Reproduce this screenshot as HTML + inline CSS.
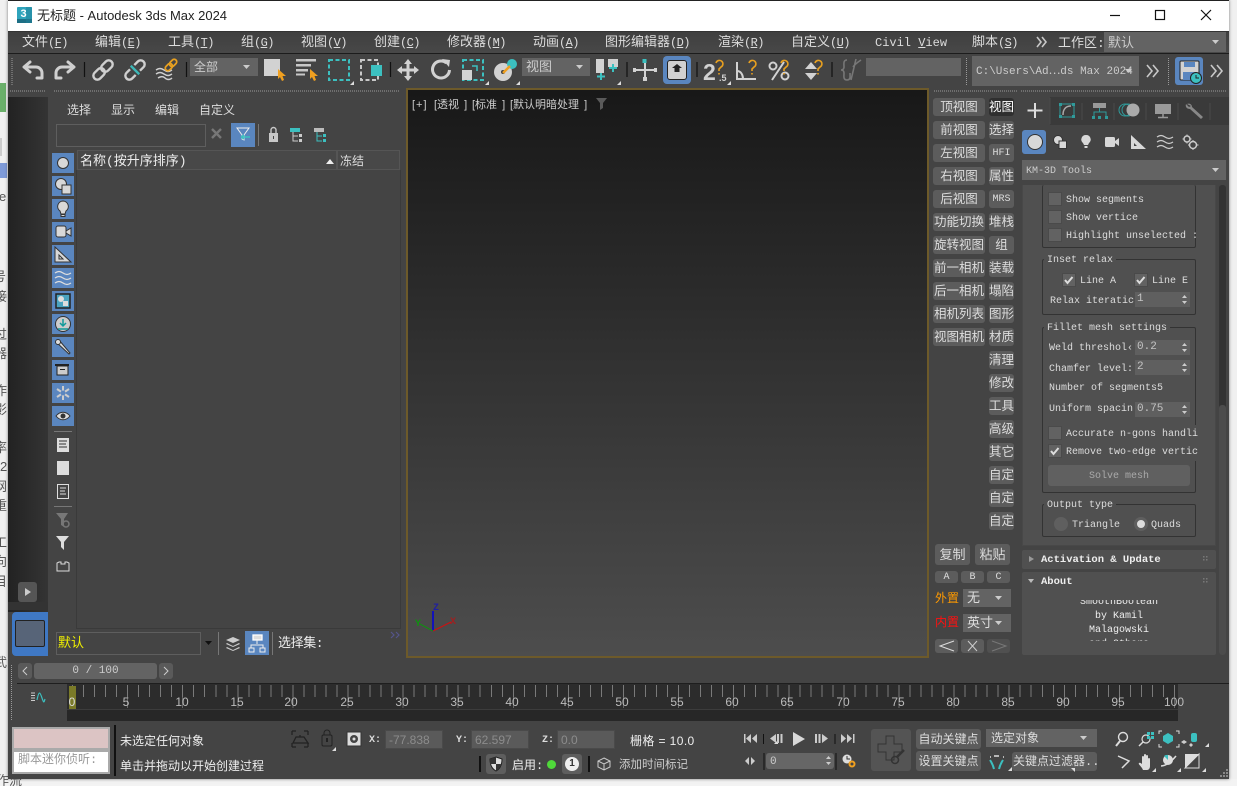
<!DOCTYPE html>
<html><head><meta charset="utf-8"><title>3ds Max</title>
<style>
html,body{margin:0;padding:0;width:1237px;height:786px;overflow:hidden;background:#f0f0f0}
body{position:relative;font:13px/16px "Liberation Mono","WenQuanYi Zen Hei","Noto Sans CJK SC",monospace;color:#ddd}
div,span.t{position:absolute}
.t{white-space:nowrap;line-height:16px;position:absolute;transform:translateY(2px)}
.t.n{transform:none}
.t.k,.t.g{transform:translateY(4px)}
.m{font-size:12px;letter-spacing:-.6px}
.m span{letter-spacing:0}
.m u{text-decoration:underline}
.cj{font-family:"Liberation Sans","WenQuanYi Zen Hei","Noto Sans CJK SC",sans-serif}
.k{font-size:10px;color:#ddd;letter-spacing:0}
.b{background:#5c5c5c;border-radius:3px;text-align:center;color:#ddd;white-space:nowrap;overflow:hidden;box-sizing:border-box;padding-top:2px;font-size:12.5px}
.c{background:#636363;color:#ddd;white-space:nowrap;overflow:hidden;box-sizing:border-box;padding-top:2px}
.bl{background:#5a86bf}
.in{background:#5a5a5a;border:1px solid #4a4a4a;box-sizing:border-box;color:#8c8c8c;font-family:"Liberation Sans",sans-serif;font-size:12px;line-height:19px;padding-left:3px}
.ck{width:12px;height:12px;background:#626262;border:1px solid #4a4a4a}
.sp{background:#5f5f5f;width:55px;height:15px;left:1135px;color:#c4c4c4;font-size:11px;line-height:15px;text-indent:2px}
.gb{border:1px solid #333;border-radius:2px;box-sizing:border-box}
.g{background:#505050;padding:0 3px;line-height:12px;font-size:10px}
.t.tl{transform:none;color:#bbb;font:12px/14px "Liberation Sans",sans-serif;top:695px;width:30px;text-align:center}
</style></head><body>
<!-- background page -->
<div style="left:0;top:83px;width:6px;height:29px;background:#6ab06a"></div>
<div style="left:0;top:138px;width:2px;height:18px;background:#ccc"></div>
<div style="left:0;top:163px;width:7px;height:15px;background:#7f9bd8"></div>
<span class="t n cj" style="left:-1px;top:189px;color:#555">e</span>
<span class="t n cj" style="left:-7px;top:269px;color:#555">号</span>
<span class="t n cj" style="left:-6px;top:289px;color:#555">接</span>
<span class="t n cj" style="left:-6px;top:327px;color:#555">过</span>
<span class="t n cj" style="left:-6px;top:346px;color:#555">器</span>
<span class="t n cj" style="left:-6px;top:383px;color:#555">作</span>
<span class="t n cj" style="left:-6px;top:402px;color:#555">影</span>
<span class="t n cj" style="left:-6px;top:440px;color:#555">率</span>
<span class="t n cj" style="left:0;top:459px;color:#555">2</span>
<span class="t n cj" style="left:-6px;top:479px;color:#555">网</span>
<span class="t n cj" style="left:-6px;top:498px;color:#555">重</span>
<span class="t n cj" style="left:-6px;top:535px;color:#555">工</span>
<span class="t n cj" style="left:-6px;top:554px;color:#555">向</span>
<span class="t n cj" style="left:-6px;top:574px;color:#555">目</span>
<span class="t n cj" style="left:-6px;top:655px;color:#555">武</span>
<div style="left:0;top:779px;width:1237px;height:7px;background:#f3f3f3"></div>
<span class="t n cj" style="left:-4px;top:773px;color:#555;font-size:13px">作流</span>

<!-- window -->
<div style="left:8px;top:0;width:1221px;height:779px;background:#444;box-shadow:0 0 3px rgba(0,0,0,.5)"></div>
<div style="left:8px;top:0;width:1221px;height:1px;background:#222"></div>
<div style="left:8px;top:1px;width:1221px;height:30px;background:#fff"></div>
<span class="t n" style="left:37px;top:8px;color:#222;font:13px/16px 'Liberation Sans','WenQuanYi Zen Hei',sans-serif">无标题 - Autodesk 3ds Max 2024</span>

<!-- menu -->
<div style="left:8px;top:31px;width:1221px;height:22px;background:linear-gradient(#3f3f3f,#484848);border-top:1px solid #333;box-sizing:border-box"></div>
<div style="left:8px;top:53px;width:1221px;height:1px;background:#1c1c1c"></div>
<span class="t m" style="left:22px;top:33px"><span style="font-size:13px">文件</span>(<u>F</u>)</span>
<span class="t m" style="left:95px;top:33px"><span style="font-size:13px">编辑</span>(<u>E</u>)</span>
<span class="t m" style="left:168px;top:33px"><span style="font-size:13px">工具</span>(<u>T</u>)</span>
<span class="t m" style="left:241px;top:33px"><span style="font-size:13px">组</span>(<u>G</u>)</span>
<span class="t m" style="left:301px;top:33px"><span style="font-size:13px">视图</span>(<u>V</u>)</span>
<span class="t m" style="left:374px;top:33px"><span style="font-size:13px">创建</span>(<u>C</u>)</span>
<span class="t m" style="left:447px;top:33px"><span style="font-size:13px">修改器</span>(<u>M</u>)</span>
<span class="t m" style="left:533px;top:33px"><span style="font-size:13px">动画</span>(<u>A</u>)</span>
<span class="t m" style="left:605px;top:33px"><span style="font-size:13px">图形编辑器</span>(<u>D</u>)</span>
<span class="t m" style="left:718px;top:33px"><span style="font-size:13px">渲染</span>(<u>R</u>)</span>
<span class="t m" style="left:791px;top:33px"><span style="font-size:13px">自定义</span>(<u>U</u>)</span>
<span class="t" style="left:875px;top:33px;font-size:12px">Civil <u>V</u>iew</span>
<span class="t m" style="left:972px;top:33px"><span style="font-size:13px">脚本</span>(<u>S</u>)</span>
<span class="t" style="left:1058px;top:34px;font-size:13px">工作区:</span>
<div class="c" style="left:1104px;top:32px;width:122px;height:20px;line-height:19px;text-indent:4px;color:#ccc">默认</div>

<!-- toolbar combos -->
<div class="c" style="left:190px;top:58px;width:68px;height:18px;line-height:16px;text-indent:4px;color:#ccc;font-size:12px">全部</div>
<div class="c" style="left:522px;top:58px;width:68px;height:18px;line-height:16px;text-indent:4px;color:#ccc;font-size:13px">视图</div>
<div class="c" style="left:866px;top:58px;width:95px;height:18px"></div>
<div class="c" style="left:972px;top:56px;width:167px;height:30px;line-height:28px;text-indent:4px;font-size:11px;color:#ccc">C:\Users\Ad⋯ds Max 2024</div>
<div class="bl" style="left:1175px;top:57px;width:28px;height:28px;border-radius:3px"></div>
<div class="bl" style="left:663px;top:56px;width:28px;height:28px;border-radius:4px"></div>
<div style="left:667px;top:60px;width:20px;height:20px;background:#d0d0d0;border:1px solid #222;border-radius:3px;box-sizing:border-box"></div>

<!-- gold strip and dark side -->
<div style="left:8px;top:97px;width:40px;height:515px;background:linear-gradient(90deg,#222,#343434)"></div>
<div style="left:18px;top:582px;width:19px;height:20px;background:#555;border-radius:3px"></div>
<div style="left:8px;top:602px;width:40px;height:8px;background:#333"></div>
<div style="left:12px;top:612px;width:36px;height:44px;background:#3f78c4;border-radius:4px 0 0 4px"></div>
<div style="left:15px;top:620px;width:30px;height:27px;background:#576478;border:1px solid #222;box-sizing:border-box;border-radius:2px"></div>

<!-- left panel -->
<span class="t" style="left:67px;top:101px;font-size:12px">选择</span>
<span class="t" style="left:111px;top:101px;font-size:12px">显示</span>
<span class="t" style="left:155px;top:101px;font-size:12px">编辑</span>
<span class="t" style="left:199px;top:101px;font-size:12px">自定义</span>
<div style="left:56px;top:124px;width:150px;height:23px;border:1px solid #5e5e5e;box-sizing:border-box;background:#434343"></div>
<div class="bl" style="left:231px;top:123px;width:24px;height:24px"></div>
<div style="left:77px;top:150px;width:260px;height:20px;border:1px solid #555;box-sizing:border-box;background:#484848"></div>
<div style="left:337px;top:150px;width:63px;height:20px;border:1px solid #555;box-sizing:border-box;background:#484848"></div>
<span class="t" style="left:80px;top:152px;font-size:13px;color:#eee">名称(按升序排序)</span>
<span class="t" style="left:340px;top:152px;font-size:12px;color:#ddd">冻结</span>
<div style="left:76px;top:170px;width:325px;height:459px;border:1px solid #3a3a3a;box-sizing:border-box;border-top:none"></div>

<div class="bl" style="left:52px;top:153px;width:22px;height:20px"></div>
<div class="bl" style="left:52px;top:176px;width:22px;height:20px"></div>
<div class="bl" style="left:52px;top:199px;width:22px;height:20px"></div>
<div class="bl" style="left:52px;top:222px;width:22px;height:20px"></div>
<div class="bl" style="left:52px;top:245px;width:22px;height:20px"></div>
<div class="bl" style="left:52px;top:268px;width:22px;height:20px"></div>
<div class="bl" style="left:52px;top:291px;width:22px;height:20px"></div>
<div class="bl" style="left:52px;top:314px;width:22px;height:20px"></div>
<div class="bl" style="left:52px;top:337px;width:22px;height:20px"></div>
<div class="bl" style="left:52px;top:360px;width:22px;height:20px"></div>
<div class="bl" style="left:52px;top:383px;width:22px;height:20px"></div>
<div class="bl" style="left:52px;top:406px;width:22px;height:20px"></div>
<div style="left:54px;top:431px;width:18px;height:1px;background:#777"></div>
<div style="left:54px;top:506px;width:18px;height:1px;background:#777"></div>

<div style="left:56px;top:632px;width:145px;height:23px;border:1px solid #5e5e5e;box-sizing:border-box;line-height:21px;color:#f0f000;font-size:13px;text-indent:1px">默认</div>
<div class="bl" style="left:245px;top:631px;width:24px;height:24px"></div>
<span class="t" style="left:278px;top:634px;font-size:13px;letter-spacing:-.4px;color:#eee">选择集:</span>

<!-- viewport -->
<div style="left:406px;top:88px;width:523px;height:570px;box-sizing:border-box;border:2px solid #6d5a2a;border-bottom-width:2px;background:linear-gradient(#181818,#4d4d4d)"></div>
<span class="t cj" style="left:412px;top:95px;font-size:11px;color:#ccc;letter-spacing:1px">[+]</span>
<span class="t cj" style="left:434px;top:95px;font-size:11px;color:#ccc;word-spacing:2px">[透视 ]</span>
<span class="t cj" style="left:472px;top:95px;font-size:11px;color:#ccc;word-spacing:2px">[标准 ]</span>
<span class="t cj" style="left:510px;top:95px;font-size:11px;color:#ccc;word-spacing:2px">[默认明暗处理 ]</span>

<!-- viewport side buttons -->
<div class="b" style="left:933px;top:98px;width:52px;height:18px;line-height:16px">顶视图</div>
<div class="b" style="left:933px;top:121px;width:52px;height:18px;line-height:16px">前视图</div>
<div class="b" style="left:933px;top:144px;width:52px;height:18px;line-height:16px">左视图</div>
<div class="b" style="left:933px;top:167px;width:52px;height:18px;line-height:16px">右视图</div>
<div class="b" style="left:933px;top:190px;width:52px;height:18px;line-height:16px">后视图</div>
<div class="b" style="left:933px;top:213px;width:52px;height:18px;line-height:16px">功能切换</div>
<div class="b" style="left:933px;top:236px;width:52px;height:18px;line-height:16px">旋转视图</div>
<div class="b" style="left:933px;top:259px;width:52px;height:18px;line-height:16px">前一相机</div>
<div class="b" style="left:933px;top:282px;width:52px;height:18px;line-height:16px">后一相机</div>
<div class="b" style="left:933px;top:305px;width:52px;height:18px;line-height:16px">相机列表</div>
<div class="b" style="left:933px;top:328px;width:52px;height:18px;line-height:16px">视图相机</div>

<div class="b" style="left:989px;top:98px;width:25px;height:18px;line-height:16px;background:#2f2f2f;color:#fff">视图</div>
<div class="b" style="left:989px;top:121px;width:25px;height:18px;line-height:16px">选择</div>
<div class="b" style="left:989px;top:144px;width:25px;height:18px;line-height:16px;font-size:10px">HFI</div>
<div class="b" style="left:989px;top:167px;width:25px;height:18px;line-height:16px">属性</div>
<div class="b" style="left:989px;top:190px;width:25px;height:18px;line-height:16px;font-size:10px">MRS</div>
<div class="b" style="left:989px;top:213px;width:25px;height:18px;line-height:16px">堆栈</div>
<div class="b" style="left:989px;top:236px;width:25px;height:18px;line-height:16px">组</div>
<div class="b" style="left:989px;top:259px;width:25px;height:18px;line-height:16px">装载</div>
<div class="b" style="left:989px;top:282px;width:25px;height:18px;line-height:16px">塌陷</div>
<div class="b" style="left:989px;top:305px;width:25px;height:18px;line-height:16px">图形</div>
<div class="b" style="left:989px;top:328px;width:25px;height:18px;line-height:16px">材质</div>
<div class="b" style="left:989px;top:351px;width:25px;height:18px;line-height:16px">清理</div>
<div class="b" style="left:989px;top:374px;width:25px;height:18px;line-height:16px">修改</div>
<div class="b" style="left:989px;top:397px;width:25px;height:18px;line-height:16px">工具</div>
<div class="b" style="left:989px;top:420px;width:25px;height:18px;line-height:16px">高级</div>
<div class="b" style="left:989px;top:443px;width:25px;height:18px;line-height:16px">其它</div>
<div class="b" style="left:989px;top:466px;width:25px;height:18px;line-height:16px">自定</div>
<div class="b" style="left:989px;top:489px;width:25px;height:18px;line-height:16px">自定</div>
<div class="b" style="left:989px;top:512px;width:25px;height:18px;line-height:16px">自定</div>

<div class="b" style="left:935px;top:544px;width:35px;height:21px;line-height:19px;font-size:13px">复制</div>
<div class="b" style="left:975px;top:544px;width:35px;height:21px;line-height:19px;font-size:13px">粘贴</div>
<div class="b" style="left:935px;top:571px;width:23px;height:12px;line-height:11px;font-size:10px;padding-top:1px">A</div>
<div class="b" style="left:961px;top:571px;width:23px;height:12px;line-height:11px;font-size:10px;padding-top:1px">B</div>
<div class="b" style="left:987px;top:571px;width:23px;height:12px;line-height:11px;font-size:10px;padding-top:1px">C</div>
<span class="t" style="left:935px;top:589px;color:#ff9a00;font-size:12px">外置</span>
<span class="t" style="left:935px;top:613px;color:#ff1010;font-size:12px">内置</span>
<div class="c" style="left:963px;top:589px;width:48px;height:18px;line-height:16px;text-indent:4px">无</div>
<div class="c" style="left:963px;top:614px;width:48px;height:18px;line-height:16px;text-indent:4px">英寸</div>
<div class="b" style="left:935px;top:639px;width:23px;height:14px"></div>
<div class="b" style="left:961px;top:639px;width:23px;height:14px"></div>
<div class="b" style="left:987px;top:639px;width:23px;height:14px;background:#505050"></div>

<!-- right panel -->
<div style="left:1021px;top:97px;width:208px;height:28px;background:#3a3a3a"></div>
<div style="left:1021px;top:97px;width:29px;height:29px;background:#444"></div>
<div class="bl" style="left:1022px;top:130px;width:24px;height:24px;border-radius:3px"></div>
<div class="c" style="left:1022px;top:160px;width:204px;height:20px;line-height:19px;text-indent:4px;font-size:10px;color:#ccc">KM-3D Tools</div>
<div style="left:1219px;top:185px;width:7px;height:470px;background:#333;border-radius:3px"></div>
<div style="left:1219px;top:405px;width:7px;height:250px;background:#4c4c4c;border-radius:3px"></div>

<div style="left:1022px;top:185px;width:194px;height:361px;background:#505050;border:1px solid #484848;box-sizing:border-box;border-top:none"></div>
<div style="left:1022px;top:550px;width:194px;height:19px;background:#505050;border-radius:2px"></div>
<div style="left:1022px;top:572px;width:194px;height:83px;background:#505050;border-radius:2px"></div>

<div class="gb" style="left:1042px;top:185px;width:154px;height:63px;border-top:none"></div>
<div class="ck" style="left:1048px;top:192px"></div><span class="t k" style="left:1066px;top:189px">Show segments</span>
<div class="ck" style="left:1048px;top:210px"></div><span class="t k" style="left:1066px;top:207px">Show vertice</span>
<div class="ck" style="left:1048px;top:228px"></div><span class="t k" style="left:1066px;top:225px">Highlight unselected :</span>

<div class="gb" style="left:1042px;top:259px;width:154px;height:56px"></div>
<span class="t g" style="left:1044px;top:251px">Inset relax</span>
<div class="ck" style="left:1062px;top:273px"></div><span class="t k" style="left:1080px;top:270px">Line A</span>
<div class="ck" style="left:1134px;top:273px"></div><span class="t k" style="left:1152px;top:270px">Line E</span>
<span class="t k" style="left:1050px;top:290px">Relax iteratic</span>
<div class="sp" style="top:292px">1</div>

<div class="gb" style="left:1042px;top:327px;width:154px;height:166px"></div>
<span class="t g" style="left:1044px;top:319px">Fillet mesh settings</span>
<span class="t k" style="left:1049px;top:337px">Weld threshol‹</span>
<div class="sp" style="top:340px">0.2</div>
<span class="t k" style="left:1049px;top:358px">Chamfer level:</span>
<div class="sp" style="top:360px">2</div>
<span class="t k" style="left:1049px;top:377px">Number of segments5</span>
<span class="t k" style="left:1049px;top:398px">Uniform spacin</span>
<div class="sp" style="top:402px">0.75</div>
<div style="left:1190px;top:425px;width:7px;height:36px;background:#505050"></div>
<div class="ck" style="left:1048px;top:426px"></div><span class="t k" style="left:1066px;top:423px">Accurate n-gons handli</span>
<div class="ck" style="left:1048px;top:444px"></div><span class="t k" style="left:1066px;top:441px">Remove two-edge vertic</span>
<div class="b" style="left:1048px;top:465px;width:142px;height:21px;line-height:20px;font-size:10px;background:#606060;color:#aaa">Solve mesh</div>

<div class="gb" style="left:1042px;top:504px;width:154px;height:33px"></div>
<span class="t g" style="left:1044px;top:496px">Output type</span>
<span class="t k" style="left:1072px;top:514px">Triangle</span>
<span class="t k" style="left:1151px;top:514px">Quads</span>
<span class="t" style="left:1041px;top:550px;font-size:10.500px;font-weight:bold;color:#eee">Activation &amp; Update</span>
<span class="t" style="left:1041px;top:572px;font-size:10.500px;font-weight:bold;color:#eee">About</span>
<div style="left:1022px;top:600px;width:194px;height:41px;overflow:hidden">
<span class="t k" style="left:0;width:194px;text-align:center;top:-9px;color:#eee">SmoothBoolean</span>
<span class="t k" style="left:0;width:194px;text-align:center;top:5px;color:#eee">by Kamil</span>
<span class="t k" style="left:0;width:194px;text-align:center;top:19px;color:#eee">Malagowski</span>
<span class="t k" style="left:0;width:194px;text-align:center;top:33px;color:#eee">and Others</span>
</div>

<!-- time slider -->
<div class="b" style="left:18px;top:663px;width:14px;height:16px;background:#5a5a5a"></div>
<div class="b" style="left:34px;top:663px;width:123px;height:16px;line-height:15px;padding-top:1px;font-size:11px;background:#636363;color:#ccc">0 / 100</div>
<div class="b" style="left:159px;top:663px;width:14px;height:16px;background:#5a5a5a"></div>

<!-- timeline -->
<div style="left:17px;top:683px;width:1212px;height:1px;background:#1e1e1e"></div>
<div style="left:67px;top:684px;width:1111px;height:25px;background:#2c2c2c"></div>
<div style="left:67px;top:709px;width:1111px;height:12px;background:#272727;border-top:1px solid #3c3c3c;box-sizing:border-box"></div>
<div style="left:72px;top:685px;width:1103px;height:12px;background:repeating-linear-gradient(90deg,#7a7a7a 0 1px,transparent 1px 11.02px)"></div>
<div style="left:72px;top:697px;width:1103px;height:11px;background:repeating-linear-gradient(90deg,#666 0 1px,transparent 1px 55.1px)"></div>
<div style="left:69px;top:686px;width:7px;height:23px;background:#7a7a28"></div>
<span class="t tl" style="left:57px;color:#ddd">0</span>
<span class="t tl" style="left:111px">5</span>
<span class="t tl" style="left:167px">10</span>
<span class="t tl" style="left:222px">15</span>
<span class="t tl" style="left:276px">20</span>
<span class="t tl" style="left:332px">25</span>
<span class="t tl" style="left:387px">30</span>
<span class="t tl" style="left:442px">35</span>
<span class="t tl" style="left:497px">40</span>
<span class="t tl" style="left:552px">45</span>
<span class="t tl" style="left:607px">50</span>
<span class="t tl" style="left:662px">55</span>
<span class="t tl" style="left:717px">60</span>
<span class="t tl" style="left:772px">65</span>
<span class="t tl" style="left:828px">70</span>
<span class="t tl" style="left:883px">75</span>
<span class="t tl" style="left:938px">80</span>
<span class="t tl" style="left:993px">85</span>
<span class="t tl" style="left:1048px">90</span>
<span class="t tl" style="left:1103px">95</span>
<span class="t tl" style="left:1159px">100</span>

<!-- status -->
<div style="left:12px;top:727px;width:98px;height:23px;background:#dcc4c4;border:2px solid #aaa;box-sizing:border-box"></div>
<div style="left:12px;top:750px;width:98px;height:24px;background:#fff;border:2px solid #aaa;box-sizing:border-box;color:#999;font-size:12px;line-height:17px;text-indent:4px;white-space:nowrap;overflow:hidden">脚本迷你侦听:</div>
<div style="left:114px;top:725px;width:2px;height:51px;background:#111"></div>
<span class="t" style="left:120px;top:732px;color:#eee;font-size:12px">未选定任何对象</span>
<span class="t" style="left:120px;top:757px;color:#eee;font-size:12px">单击并拖动以开始创建过程</span>
<span class="t k" style="left:369px;top:729px;font-weight:bold">X:</span>
<div class="in" style="left:385px;top:730px;width:58px;height:19px">-77.838</div>
<span class="t k" style="left:456px;top:729px;font-weight:bold">Y:</span>
<div class="in" style="left:471px;top:730px;width:58px;height:19px">62.597</div>
<span class="t k" style="left:542px;top:729px;font-weight:bold">Z:</span>
<div class="in" style="left:557px;top:730px;width:58px;height:19px">0.0</div>
<span class="t cj" style="left:630px;top:731px;font-size:12px;letter-spacing:.4px;color:#eee">栅格 = 10.0</span>
<div style="left:479px;top:756px;width:2px;height:16px;background:#111"></div>
<div class="b" style="left:486px;top:754px;width:20px;height:20px;background:#5e5e5e"></div>
<span class="t" style="left:512px;top:756px;font-size:12px;color:#eee">启用:</span>
<div style="left:547px;top:760px;width:9px;height:9px;border-radius:50%;background:#4fd83a"></div>
<div class="b" style="left:562px;top:754px;width:20px;height:20px;background:#5e5e5e"></div>
<div style="left:565px;top:757px;width:14px;height:14px;border-radius:50%;background:#eee;color:#333;font:bold 10px/14px 'Liberation Sans',sans-serif;text-align:center">1</div>
<div style="left:588px;top:756px;width:2px;height:16px;background:#111"></div>
<span class="t" style="left:619px;top:756px;font-size:11.500px;color:#ccc">添加时间标记</span>

<div class="b" style="left:871px;top:729px;width:40px;height:42px;background:#545454"></div>
<div class="b" style="left:916px;top:729px;width:65px;height:20px;line-height:18px;font-size:12px">自动关键点</div>
<div class="b" style="left:916px;top:751px;width:65px;height:20px;line-height:18px;font-size:12px">设置关键点</div>
<div class="c" style="left:986px;top:729px;width:111px;height:18px;line-height:16px;text-indent:5px;font-size:12px">选定对象</div>
<div class="b" style="left:1012px;top:752px;width:85px;height:19px;line-height:17px;font-size:12px;text-align:left;text-indent:1px">关键点过滤器..</div>
<div class="b" style="left:766px;top:753px;width:68px;height:16px;line-height:14px;background:#666;text-align:left;text-indent:4px;font-size:11px;color:#ccc">0</div>

<!-- icon overlay -->
<svg style="position:absolute;left:0;top:0" width="1237" height="786" viewBox="0 0 1237 786" fill="none">
<!-- app icon -->
<rect x="17" y="7" width="15" height="16" rx="1" fill="#2fa4bc"/><rect x="17" y="19" width="15" height="4" fill="#1d6f85"/><rect x="26" y="7" width="6" height="16" fill="#1f7f98" opacity=".5"/>
<text x="20.500" y="17" font-family="Liberation Sans" font-size="11" font-weight="bold" fill="#fff">3</text>
<!-- window controls -->
<path d="M1110 15.500h10" stroke="#111" stroke-width="1.200"/>
<rect x="1155.500" y="10.500" width="9" height="9" stroke="#111" stroke-width="1.200"/>
<path d="M1201 10l10 10M1211 10l-10 10" stroke="#111" stroke-width="1.200"/>
<!-- grips -->
<g stroke="#9a9a9a" stroke-dasharray="1 1">
<path d="M12 58v27M966.500 58v27M1168.500 58v27M11.500 665v55"/>
<path d="M10 91h35M54 91h345M934 91h83M1021 91h205"/>
</g>
<!-- chevrons -->
<g stroke="#c8c8c8" stroke-width="1.600">
<path d="M1037 37l4 5-4 5M1042 37l4 5-4 5"/><path d="M1147 65l5 6-5 6M1153 65l5 6-5 6"/><path d="M1211 65l5 6-5 6M1217 65l5 6-5 6"/>
</g>
<path d="M391 632l3 3-3 3M396 632l3 3-3 3" stroke="#55558a" stroke-width="1.200"/>
<!-- dropdown arrows -->
<g fill="#ccc">
<path d="M1212 40h7l-3.500 4zM243 65h7l-3.500 4zM576 65h7l-3.500 4zM1125 69h7l-3.500 4zM1212 168h7l-3.500 4zM995 596h7l-3.500 4zM995 621h7l-3.500 4zM1080 736h7l-3.500 4z"/>
<path d="M205 641h7l-3.500 4z" fill="#111"/>
</g>
<!-- separators -->
<g stroke="#111" stroke-width="1.200"><path d="M84.500 62v15M186.500 62v15M390.500 62v15M627 62v15M697 62v15M832 62v15"/></g>
<path d="M258.500 124v22M218.500 632v23M272.500 632v23" stroke="#777"/>
<!-- undo redo -->
<g stroke="#cfcfcf" stroke-width="3" stroke-linecap="round" stroke-linejoin="round">
<path d="M26 67h10a6 6 0 0 1 6 6v5h-5"/><path d="M30 62l-6 5 6 5"/>
<path d="M72 67h-10a6 6 0 0 0-6 6v5h5"/><path d="M68 62l6 5-6 5"/>
</g>
<!-- link/unlink/bind -->
<g stroke="#cfcfcf" stroke-width="2.400">
<g transform="translate(103 70) rotate(-45)"><rect x="-12" y="-4" width="13" height="8" rx="4"/><rect x="-1" y="-4" width="13" height="8" rx="4"/></g>
<g transform="translate(135 70) rotate(-45)"><path d="M-3-4h-5a4 4 0 0 0 0 8h5M3-4h5a4 4 0 0 1 0 8h-5"/><path d="M0-6v12" stroke="#3cb8b8"/></g>
<path d="M156 70c3-2 5-2 8 0s5 2 8 0M156 74c3-2 5-2 8 0s5 2 8 0M158 78c3-2 5-2 7 0s5 2 7 0" stroke-width="1.400"/>
</g>
<g transform="translate(171 65) rotate(-45)" stroke="#e8a020" stroke-width="1.800"><rect x="-7" y="-2.500" width="8" height="5" rx="2.500"/><rect x="-1" y="-2.500" width="8" height="5" rx="2.500"/></g>
<!-- select icons -->
<rect x="264" y="59" width="16" height="17" fill="#d2d2d2"/>
<path d="M278 69l8 7h-3.500l1.500 4-2 1-2-4-2 2z" fill="#f0a020"/>
<g fill="#c8c8c8"><rect x="296" y="59" width="20" height="2.500"/><rect x="296" y="64" width="15" height="2.500"/><rect x="296" y="69" width="12" height="2.500"/><rect x="296" y="73.500" width="9" height="2"/></g>
<path d="M310 69l8 7h-3.500l1.500 4-2 1-2-4-2 2z" fill="#f0a020"/>
<rect x="329" y="60" width="20" height="20" stroke="#3cc0c0" stroke-width="2" stroke-dasharray="4 2.500"/>
<rect x="361" y="60" width="17" height="20" stroke="#c8c8c8" stroke-width="2" stroke-dasharray="4 2.500"/>
<rect x="371" y="65" width="11" height="11" fill="#3cc0c0"/>
<!-- corner marks -->
<g fill="#ddd"><path d="M354 81v4h-4zM489 81v4h-4zM520 81v4h-4zM621 81v4h-4zM731 81v4h-4zM336 747v4h-4zM778 740v4h-4zM1075 772v-4h-4z M1209 743v4h-4zM1156 768v4h-4zM1181 768v4h-4zM1206 768v4h-4zM1012 767v4h-4z"/></g>
<!-- move -->
<path d="M408 59l4 5h-2.500v4.500h4.500V66l5 4-5 4v-2.500h-4.500V76H412l-4 5-4-5h2.500v-4.500H402V74l-5-4 5-4v2.500h4.500V64H404z" fill="#d2d2d2"/>
<!-- rotate -->
<path d="M446.500 63a8.500 8.500 0 1 0 3 7" stroke="#d2d2d2" stroke-width="3"/><path d="M442 59l8 1-1 7z" fill="#d2d2d2"/>
<!-- scale -->
<rect x="463" y="60" width="20" height="20" stroke="#3cc0c0" stroke-width="2" stroke-dasharray="4 2.500"/><rect x="462" y="70" width="10" height="10" fill="#d2d2d2"/><path d="M472 66h5v5" stroke="#3cc0c0" stroke-width="1.500"/>
<!-- ref coord -->
<circle cx="503" cy="72" r="9" fill="#d2d2d2"/><circle cx="503" cy="72" r="2" fill="#444"/><circle cx="512" cy="64" r="5" fill="#3cc0c0"/><path d="M503 73l7-7" stroke="#f0a020" stroke-width="2.500"/>
<!-- pivot -->
<rect x="596" y="59" width="8" height="14" fill="#d2d2d2"/><rect x="608" y="59" width="10" height="8" fill="#d2d2d2"/>
<path d="M601 73v7M597 76.500h8M613 64v8M609 68h8" stroke="#3cc0c0" stroke-width="2"/>
<!-- align -->
<path d="M645 62v18M635 70h20" stroke="#d2d2d2" stroke-width="2"/><rect x="642.500" y="59" width="4" height="4" fill="#3cc0c0"/><rect x="633" y="68" width="3" height="4" fill="#d2d2d2"/><rect x="654" y="68" width="3" height="4" fill="#d2d2d2"/><rect x="643" y="77" width="4" height="4" fill="#d2d2d2"/>
<!-- manage -->
<path d="M677 64l5 4h-2.500v4h-5v-4H672z" fill="#222"/>
<!-- snaps -->
<text x="703" y="80" font-family="Liberation Sans" font-size="23" font-weight="bold" fill="#d2d2d2">2</text><text x="719" y="81" font-family="Liberation Sans" font-size="9" font-weight="bold" fill="#d2d2d2">.5</text>
<path d="M716 63a3.500 3.500 0 1 1 5 4l-2 2v2M719 73v1.500" stroke="#e8a020" stroke-width="1.600"/>
<path d="M737 62v17h19M737 71c4 0 6 4 6 8" stroke="#d2d2d2" stroke-width="2"/>
<path d="M749 63a3.500 3.500 0 1 1 5 4l-2 2v2M752 73v1.500" stroke="#e8a020" stroke-width="1.600"/>
<path d="M772 80l12-18" stroke="#d2d2d2" stroke-width="2"/><circle cx="773" cy="66" r="3.500" stroke="#d2d2d2" stroke-width="2"/><circle cx="785" cy="76" r="3.500" stroke="#d2d2d2" stroke-width="2"/>
<path d="M781 63a3.500 3.500 0 1 1 5 4l-2 2v2M784 73v1.500" stroke="#e8a020" stroke-width="1.600"/>
<path d="M805 69l6-7 6 7zM805 73h12l-6 7z" fill="#d2d2d2"/>
<path d="M815 63a3.500 3.500 0 1 1 5 4l-2 2v2M818 73v1.500" stroke="#e8a020" stroke-width="1.600"/>
<path d="M847 60c-4 0-3 4-3 7s-3 3-3 3 3 0 3 3-1 7 3 7c4 0 3-4 3-7M856 59l-5 21M861 60c-3 2-6 4-8 7" stroke="#777" stroke-width="1.600"/>
<!-- save -->
<rect x="1180" y="61" width="19" height="19" rx="1" fill="#d2d2d2" stroke="#222"/><rect x="1184" y="62" width="11" height="5" fill="#5a86bf"/><rect x="1183" y="72" width="13" height="8" fill="#5a86bf"/><circle cx="1196" cy="78" r="5.500" fill="#3cc0c0" stroke="#222"/><path d="M1196 75v3h3" stroke="#222"/>
<!-- left tool icons -->
<path d="M212 129l9 9M221 129l-9 9" stroke="#777" stroke-width="2.400"/>
<path d="M237 128h12l-5 7v5l-2-1v-4z" stroke="#eee" fill="#5a86bf"/><path d="M241 137h9M241 137l3-2M241 137l3 2" stroke="#3cc0c0" stroke-width="1.500"/>
<rect x="269" y="133" width="9" height="9" fill="#c8c8c8"/><path d="M271 133v-3a2.500 2.500 0 0 1 5 0v3" stroke="#c8c8c8" stroke-width="1.400"/><rect x="273" y="136" width="1" height="3" fill="#444"/>
<rect x="290" y="128" width="10" height="4" fill="#3cc0c0"/><path d="M293 132v9h5M293 136h5" stroke="#ccc"/><rect x="299" y="134" width="3" height="3" fill="#ccc"/><rect x="299" y="139" width="3" height="3" fill="#ccc"/>
<rect x="314" y="128" width="10" height="4" fill="#bbb"/><path d="M317 132v9h5M317 136h5" stroke="#3cc0c0"/><rect x="323" y="134" width="3" height="3" fill="#3cc0c0"/><rect x="323" y="139" width="3" height="3" fill="#3cc0c0"/>
<path d="M326 164h8l-4-5z" fill="#eee"/>
<!-- left list icons -->
<g stroke="#333" fill="#d8d8d8">
<circle cx="63" cy="163" r="5.500"/>
<circle cx="61" cy="184" r="5.500"/><rect x="62" y="185" width="9" height="9"/>
<path d="M63 201a5.500 5.500 0 0 1 3 10l-1 3h-4l-1-3a5.500 5.500 0 0 1 3-10z"/><rect x="61" y="214.500" width="4" height="2"/>
<rect x="56" y="226" width="10" height="11" rx="2"/><path d="M66 231l5-3v8l-5-3z"/>
<path d="M55 247v15h16zM59 255v4h4z"/>
</g>
<path d="M55 273c3-2 5-2 8 0s5 2 8 0M55 278c3-2 5-2 8 0s5 2 8 0M55 283c3-2 5-2 8 0s5 2 8 0" stroke="#ddd" stroke-width="1.300"/>
<rect x="56" y="294" width="14" height="14" stroke="#222" stroke-width="1.500" fill="#3cc0c0" fill-opacity=".5"/><circle cx="61" cy="299" r="3" fill="#ddd"/><rect x="63" y="301" width="5" height="5" fill="#ddd"/>
<circle cx="63" cy="324" r="7.500" fill="#ccc" stroke="#333"/><path d="M63 319v6M60 323l3 3 3-3M58 329h10" stroke="#109a9a" stroke-width="1.500"/>
<path d="M56 342l3-2 11 13-1 1z" fill="#ddd" stroke="#333"/><circle cx="58" cy="342" r="2.500" fill="#ddd" stroke="#333"/>
<rect x="55" y="364" width="14" height="2" fill="#222"/><rect x="57" y="366" width="11" height="9" fill="#ccc" stroke="#222"/><rect x="60" y="369" width="5" height="1" fill="#222"/>
<g stroke="#ccc" stroke-width="2"><path d="M63 386v14M57 389l12 8M69 389l-12 8"/></g><circle cx="63" cy="393" r="2.500" fill="#5a86bf"/>
<path d="M56 416c4-5 10-5 14 0-4 5-10 5-14 0z" fill="#ddd" stroke="#333"/><circle cx="63" cy="416" r="2.500" fill="#333"/>
<rect x="57" y="438" width="12" height="14" fill="#ddd"/><path d="M59 441h8M59 444h7M59 447h8" stroke="#333"/>
<rect x="57" y="461" width="12" height="14" fill="#ddd"/>
<rect x="57.500" y="484.500" width="11" height="14" stroke="#ddd"/><path d="M60 488h6M60 491h5M60 494h6" stroke="#ddd"/>
<path d="M56 513h12l-4 6v8l-3-2v-6z" fill="#777"/><circle cx="66" cy="524" r="3" stroke="#777" stroke-width="1.500"/>
<path d="M56 536h13l-5 6v8l-3-3v-5z" fill="#ddd"/>
<path d="M57 571v-8l2-1h2v2h4v-2h2l2 1v8z" stroke="#ddd"/>
<path d="M25 588l6 4-6 4z" fill="#ccc"/>
<!-- layer icons -->
<path d="M233 637l7 3-7 3-7-3z M226 644l7 3 7-3-1-1-6 3-6-3zM226 648l7 3 7-3-1-1-6 3-6-3z" fill="#ccc"/>
<rect x="253" y="635" width="9" height="5" stroke="#fff" stroke-width="1.300" fill="#ddd"/><path d="M257 640v4M251 648v-3h12v3" stroke="#eee"/><rect x="249" y="648" width="5" height="4" stroke="#eee"/><rect x="260" y="648" width="5" height="4" stroke="#eee"/>
<path d="M596 98h11l-4 5v5l-3 2v-7z" fill="#5a5a5a"/>
<!-- gizmo -->
<path d="M433 631v-20" stroke="#0000e0" stroke-width="1.500"/><path d="M433 631l18-9" stroke="#d01010"/><path d="M433 631l-13-7" stroke="#109010"/>
<text x="433" y="610" font-family="Liberation Mono" font-size="10" font-weight="bold" fill="#2020a0">Z</text>
<text x="450" y="624" font-family="Liberation Mono" font-size="10" font-weight="bold" fill="#a02020">X</text>
<text x="415" y="626" font-family="Liberation Mono" font-size="10" font-weight="bold" fill="#109010">Y</text>
<!-- < x > -->
<path d="M954 641l-14 5 14 5" stroke="#ddd"/><path d="M968 641l9 10M977 641l-9 10" stroke="#ccc"/><path d="M992 641l14 5-14 5" stroke="#777"/>
<!-- right tabs -->
<path d="M1035 103v15M1027.500 110.500h15" stroke="#ddd" stroke-width="2"/>
<rect x="1060" y="104" width="14" height="13" stroke="#2f9a9a"/><path d="M1063 115c0-6 3-9 8-9" stroke="#aaa" stroke-width="1.500"/><g fill="#2f9a9a"><rect x="1059" y="103" width="3" height="3"/><rect x="1072" y="103" width="3" height="3"/><rect x="1059" y="115" width="3" height="3"/><rect x="1072" y="115" width="3" height="3"/></g>
<rect x="1093" y="103" width="13" height="5" fill="#999"/><path d="M1099.500 108v4M1094 117v-5h12v5" stroke="#2f9a9a"/><rect x="1092" y="116" width="3" height="3" fill="#2f9a9a"/><rect x="1098" y="116" width="3" height="3" fill="#2f9a9a"/><rect x="1105" y="116" width="3" height="3" fill="#2f9a9a"/>
<circle cx="1125" cy="110" r="6" stroke="#2f9a9a"/><circle cx="1128" cy="110" r="6" stroke="#2f9a9a"/><circle cx="1133" cy="110" r="6.500" fill="#aaa"/>
<rect x="1155" y="104" width="16" height="10" fill="#999"/><path d="M1163 114v3M1158 117.500h10" stroke="#999" stroke-width="1.500"/>
<path d="M1187 104c2-1 5 0 5 3l11 10-2 2-11-10c-3 0-5-2-4-5l3 3 2-1z" fill="#888"/>
<path d="M1050 98v26M1082 103v17M1114 103v17M1146 103v17M1178 103v17M1210 103v17" stroke="#4a4a4a"/>
<!-- right subtabs -->
<circle cx="1035" cy="142" r="7.500" fill="#d8d8d8" stroke="#333"/>
<circle cx="1058" cy="140" r="4.500" fill="#d8d8d8" stroke="#333"/><rect x="1059" y="141" width="7.500" height="7.500" fill="#d8d8d8" stroke="#333"/>
<path d="M1086 135a4.500 4.500 0 0 1 3 8l-1 2h-4l-1-2a4.500 4.500 0 0 1 3-8z" fill="#d8d8d8"/><rect x="1084.500" y="146" width="3" height="2" fill="#d8d8d8"/>
<rect x="1105" y="137" width="10" height="10" rx="1.500" fill="#d8d8d8"/><path d="M1115 141l4-3v8l-4-3z" fill="#d8d8d8"/>
<path d="M1131 135v14h15zM1134 143v3h3z" fill="#d8d8d8" fill-rule="evenodd"/>
<path d="M1157 137c3-2 5-2 8 0s5 2 8 0M1157 142c3-2 5-2 8 0s5 2 8 0M1157 147c3-2 5-2 8 0s5 2 8 0" stroke="#ccc" stroke-width="1.200"/>
<circle cx="1187" cy="139" r="3" stroke="#ccc" stroke-width="1.500"/><circle cx="1193" cy="145" r="3.500" stroke="#ccc" stroke-width="1.500"/>
<path d="M1187 134.500v1.500M1187 142v1.500M1182.500 139h1.500M1190 139h1.500M1193 140v1.500M1193 148.500v1.500M1188 145h1.500M1197 145h1.500" stroke="#ccc"/>
<!-- spinner arrows -->
<g fill="#ccc">
<path d="M1182 298l2.500-3 2.500 3zM1182 301h5l-2.500 3z"/>
<path d="M1182 346l2.500-3 2.500 3zM1182 349h5l-2.500 3z"/>
<path d="M1182 366l2.500-3 2.500 3zM1182 369h5l-2.500 3z"/>
<path d="M1182 408l2.500-3 2.500 3zM1182 411h5l-2.500 3z"/>
<path d="M826 759l2.500-3 2.500 3zM826 762h5l-2.500 3z"/>
</g>
<!-- checks -->
<path d="M1065 280l2.500 3 5-6M1137 280l2.500 3 5-6M1051 451l2.500 3 5-6" stroke="#ddd" stroke-width="2"/>
<!-- radios -->
<circle cx="1061" cy="524" r="7" fill="#5f5f5f"/><circle cx="1141" cy="524" r="7" fill="#5f5f5f"/><circle cx="1141" cy="524" r="4" fill="#ddd"/>
<!-- rollout arrows -->
<path d="M1029 556l5 3-5 3z" fill="#999"/><path d="M1028 579h6l-3 4z" fill="#bbb"/>
<g fill="#777"><rect x="1203" y="556" width="1.500" height="1.500"/><rect x="1206" y="556" width="1.500" height="1.500"/><rect x="1203" y="559" width="1.500" height="1.500"/><rect x="1206" y="559" width="1.500" height="1.500"/><rect x="1203" y="578" width="1.500" height="1.500"/><rect x="1206" y="578" width="1.500" height="1.500"/><rect x="1203" y="581" width="1.500" height="1.500"/><rect x="1206" y="581" width="1.500" height="1.500"/></g>
<!-- time slider -->
<path d="M27 667l-4 4 4 4M164 667l4 4-4 4" stroke="#ccc"/>
<path d="M31 693h4M31 695.500h4M31 698h4M31 700.500h4" stroke="#ccc"/><path d="M37 700c2-10 3-8 5-2s2 4 3 1" stroke="#3cc0c0" stroke-width="1.200"/>
<!-- status icons -->
<g stroke="#222" stroke-width="1.300"><path d="M292 731h4M292 731v4M308 731h-4M308 731v4M292 747h4M292 747v-4M308 747h-4M308 747v-4"/><path d="M296 737h8l4 6h-15zM300 737v-2"/></g>
<rect x="322" y="735" width="10" height="11" rx="1.500" stroke="#222"/><path d="M324 735v-2a3 3 0 0 1 6 0v2" stroke="#222"/><rect x="326" y="738" width="2" height="4" fill="#222"/>
<rect x="347" y="732" width="14" height="14" fill="#ddd" stroke="#333"/><circle cx="354" cy="739" r="4" fill="#444"/><circle cx="354" cy="739" r="1.500" fill="#ddd"/>
<path d="M496 757l6 2c0 6-2 10-6 12-4-2-6-6-6-12z" fill="#ddd" stroke="#222"/><path d="M496 757v7h-6c0-2 0-3 0-5zM496 764h5c-1 3-2 5-5 7z" fill="#333"/>
<path d="M604 758l6 3v6l-6 3-6-3v-6zM598 761l6 3 6-3M604 764v6" stroke="#ccc"/>
<!-- playback -->
<g fill="#ccc"><path d="M744 734h1.500v9H744zM751 734v9l-5-4.500zM757 734v9l-5-4.500z"/>
<path d="M776 734v9l-6-4.500zM777 734h2v9h-2zM780.500 734h2v9h-2z"/>
<path d="M793 732l12 7-12 7z" fill="#d8d8d8"/><path d="M815 734h2v9h-2zM818.500 734h2v9h-2zM822 734l6 4.500-6 4.500z"/>
<path d="M841 734l5 4.500-5 4.500zM847 734l5 4.500-5 4.500zM853 734h1.500v9H853z"/>
<path d="M749 757l-4 4 4 4zM751 757l4 4-4 4z"/></g>
<path d="M763.500 734v10M835 734v10M764 753v17M836 753v17" stroke="#111" stroke-width="1"/>
<circle cx="847" cy="759" r="4.500" fill="#ddd"/><path d="M847 756v3h3" stroke="#333"/><circle cx="852" cy="764" r="2.500" stroke="#f0a020" stroke-width="2"/>
<!-- key big -->
<path d="M886 736h8v8h8v8h-8v8h-8v-8h-8v-8h8z" stroke="#333" fill="none"/>
<circle cx="895" cy="760" r="3.500" stroke="#333" stroke-width="1.500"/><path d="M897 757l7-7" stroke="#333" stroke-width="2.400"/>
<!-- curve keyfilter icon -->
<path d="M990 760c2 3 3 5 4 9M1003 760c-2 3-3 5-4 9" stroke="#3cc0c0" stroke-width="2"/><path d="M990 757h1M1003 757h1M994 756h5" stroke="#ddd" stroke-width="1.500"/>
<!-- nav -->
<circle cx="1123" cy="737" r="4.500" stroke="#ddd" stroke-width="1.400"/><path d="M1120 741l-4 5" stroke="#ddd" stroke-width="2"/>
<circle cx="1146" cy="739" r="4" stroke="#ddd" stroke-width="1.200"/><path d="M1143 742l-4 4" stroke="#ddd" stroke-width="1.500"/><g fill="#3cc0c0"><rect x="1147" y="732" width="3" height="3"/><rect x="1151" y="732" width="3" height="3"/><rect x="1151" y="736" width="3" height="3"/><rect x="1147" y="736" width="3" height="3"/></g>
<path d="M1162 731h-3v3M1176 731h3v3M1162 747h-3v-3M1176 747h3v-3" stroke="#ddd"/><path d="M1168 733l5 3v5l-5 3-5-3v-5z" fill="#3cc0c0"/>
<rect x="1191" y="733" width="6" height="9" rx="2" fill="#3cc0c0"/><path d="M1184 740l3 2-3 2-3-2z" fill="#ccc"/><path d="M1189 745l2-2 2 2-2 2z" fill="#ccc"/>
<path d="M1118 756l11 5-7 7" stroke="#ddd" stroke-width="1.500"/>
<path d="M1142 768c-2-3-4-4-3-5s3 1 3 1v-7a1 1 0 0 1 2 0v4-6a1 1 0 0 1 2 0v6-5a1 1 0 0 1 2 0v6-3a1 1 0 0 1 2 0v7c0 2-1 4-3 4h-4z" fill="#ddd"/>
<circle cx="1168" cy="760" r="5" fill="#ddd"/><path d="M1161 766c5 0 11-5 15-10" stroke="#ddd" stroke-width="1.500"/><path d="M1164 756a5 5 0 0 1 4-1v5z" fill="#3cc0c0"/>
<rect x="1185" y="754" width="14" height="14" fill="#ddd"/><path d="M1185 768l14-14v14z" fill="#444" stroke="#ddd"/>
<!-- grip -->
<g fill="#888"><rect x="1226" y="772" width="2" height="2"/><rect x="1226" y="775" width="2" height="2"/><rect x="1223" y="775" width="2" height="2"/><rect x="1226" y="769" width="2" height="2"/><rect x="1223" y="772" width="2" height="2"/><rect x="1220" y="775" width="2" height="2"/></g>
</svg>
</body></html>
